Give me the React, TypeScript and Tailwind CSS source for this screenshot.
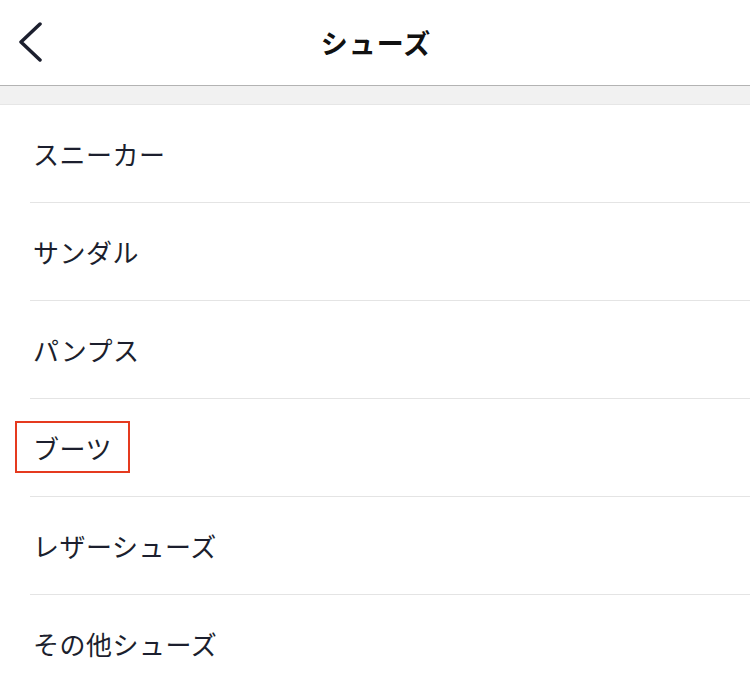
import React from "react";

const items = ["スニーカー", "サンダル", "パンプス", "ブーツ", "レザーシューズ", "その他シューズ"];

export default function App() {
  return (
    <div
      className="w-[750px] h-[691px] bg-white overflow-hidden text-[#1c1f2e]"
      style={{ fontFamily: '"Noto Sans CJK JP", "Noto Sans", sans-serif' }}
    >
      <header className="relative h-[86px] flex items-center justify-center border-b border-[#b3b3b3]">
        <svg className="absolute left-[16px] top-[22px]" width="30" height="40" viewBox="0 0 30 40" fill="none">
          <path d="M24 2 L5 20 L24 38" stroke="#1c1f2e" strokeWidth="3.5" strokeLinecap="round" strokeLinejoin="round" />
        </svg>
        <h1 className="text-[27px] font-bold leading-none text-[#111] tracking-[1px] ml-[2px]">シューズ</h1>
      </header>
      <div className="h-[19px] bg-[#f1f1f1] border-b border-[#e6e6e6]" />
      <ul>
        {items.map((t, i) => (
          <li key={t} className="pl-[30px]">
            <div className={`relative h-[98px] flex items-center ${i < items.length - 1 ? "border-b border-[#e4e4e4]" : ""}`}>
              <span className="text-[26px] leading-none ml-[3px] tracking-[0.5px] font-normal">{t}</span>
              {t === "ブーツ" && (
                <div className="absolute left-[-15px] top-[22px] w-[115px] h-[52px] border-[2.5px] border-[#e53a1f]" />
              )}
            </div>
          </li>
        ))}
      </ul>
    </div>
  );
}
